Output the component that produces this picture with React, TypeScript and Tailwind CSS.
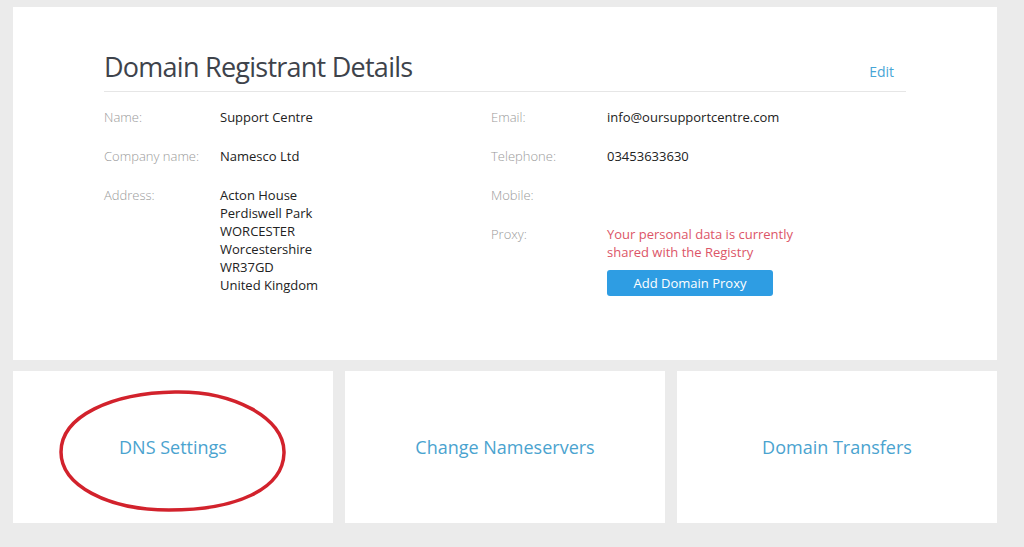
import React from 'react';

const font = { fontFamily: '"Open Sans", "Liberation Sans", sans-serif' };

function Row({ label, children }: { label: string; children: React.ReactNode }) {
  return (
    <div className="flex text-[13px] leading-[18px]">
      <div className="w-[116px] shrink-0 font-light text-[#9a9a9a]">{label}</div>
      <div className="text-[#222]">{children}</div>
    </div>
  );
}

function LinkCard({ label, circled }: { label: string; circled?: boolean }) {
  return (
    <div className="relative flex h-[152px] items-center justify-center bg-white">
      <span className="text-[18px] text-[#4aa3cf]">{label}</span>
      {circled && (
        <svg className="pointer-events-none absolute left-[44px] top-[18px]" width="232" height="124" viewBox="0 0 232 124">
          <path
            d="M118 3 C 175 2, 228 28, 227 64 C 226 100, 180 121, 112 121 C 50 121, 4 96, 4 63 C 4 27, 55 4, 118 3 Z"
            fill="none"
            stroke="#d2222c"
            strokeWidth="3.5"
          />
        </svg>
      )}
    </div>
  );
}

export default function App() {
  return (
    <div className="min-h-[547px] bg-[#ebebeb] pl-[13px] pr-[27px] pt-[7px] pb-[24px]" style={font}>
      {/* Registrant details */}
      <div className="h-[353px] bg-white px-[91px] pt-[46px]">
        <div className="flex items-baseline justify-between border-b border-[#e6e6e6] pb-[9px]">
          <h1 className="text-[27px] leading-[28px] tracking-[-0.75px] text-[#3e434b]">Domain Registrant Details</h1>
          <a className="mr-3 text-[14px] text-[#47a5d6]">Edit</a>
        </div>

        <div className="flex pt-[16px]">
          <div className="flex w-[387px] flex-col gap-[21px]">
            <Row label="Name:">Support Centre</Row>
            <Row label="Company name:">Namesco Ltd</Row>
            <Row label="Address:">
              <div>Acton House</div>
              <div>Perdiswell Park</div>
              <div>WORCESTER</div>
              <div>Worcestershire</div>
              <div>WR37GD</div>
              <div>United Kingdom</div>
            </Row>
          </div>
          <div className="flex flex-1 flex-col gap-[21px]">
            <Row label="Email:">info@oursupportcentre.com</Row>
            <Row label="Telephone:">03453633630</Row>
            <Row label="Mobile:">{''}</Row>
            <div className="flex text-[13px] leading-[18px]">
              <div className="w-[116px] shrink-0 font-light text-[#9a9a9a]">Proxy:</div>
              <div>
                <div className="w-[200px] text-[#dc5567]">Your personal data is currently shared with the Registry</div>
                <button className="mt-[9px] h-[26px] w-[166px] rounded-[3px] bg-[#2e9de3] text-[13px] text-white">
                  Add Domain Proxy
                </button>
              </div>
            </div>
          </div>
        </div>
      </div>

      {/* Quick links */}
      <div className="mt-[11px] grid grid-cols-3 gap-[12px]">
        <LinkCard label="DNS Settings" circled />
        <LinkCard label="Change Nameservers" />
        <LinkCard label="Domain Transfers" />
      </div>
    </div>
  );
}
